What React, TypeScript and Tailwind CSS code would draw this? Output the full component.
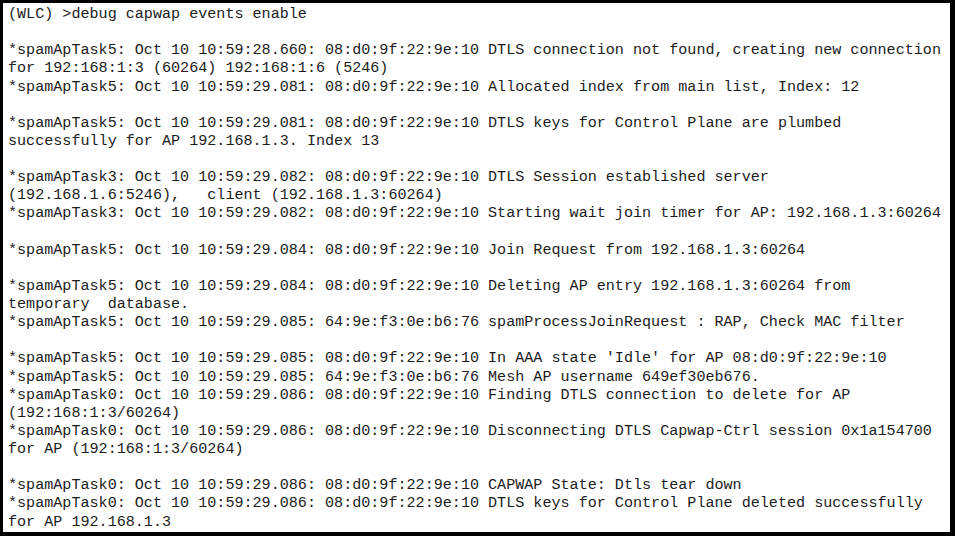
const lines = [
  "(WLC) >debug capwap events enable",
  "",
  "*spamApTask5: Oct 10 10:59:28.660: 08:d0:9f:22:9e:10 DTLS connection not found, creating new connection",
  "for 192:168:1:3 (60264) 192:168:1:6 (5246)",
  "*spamApTask5: Oct 10 10:59:29.081: 08:d0:9f:22:9e:10 Allocated index from main list, Index: 12",
  "",
  "*spamApTask5: Oct 10 10:59:29.081: 08:d0:9f:22:9e:10 DTLS keys for Control Plane are plumbed",
  "successfully for AP 192.168.1.3. Index 13",
  "",
  "*spamApTask3: Oct 10 10:59:29.082: 08:d0:9f:22:9e:10 DTLS Session established server",
  "(192.168.1.6:5246),   client (192.168.1.3:60264)",
  "*spamApTask3: Oct 10 10:59:29.082: 08:d0:9f:22:9e:10 Starting wait join timer for AP: 192.168.1.3:60264",
  "",
  "*spamApTask5: Oct 10 10:59:29.084: 08:d0:9f:22:9e:10 Join Request from 192.168.1.3:60264",
  "",
  "*spamApTask5: Oct 10 10:59:29.084: 08:d0:9f:22:9e:10 Deleting AP entry 192.168.1.3:60264 from",
  "temporary  database.",
  "*spamApTask5: Oct 10 10:59:29.085: 64:9e:f3:0e:b6:76 spamProcessJoinRequest : RAP, Check MAC filter",
  "",
  "*spamApTask5: Oct 10 10:59:29.085: 08:d0:9f:22:9e:10 In AAA state 'Idle' for AP 08:d0:9f:22:9e:10",
  "*spamApTask5: Oct 10 10:59:29.085: 64:9e:f3:0e:b6:76 Mesh AP username 649ef30eb676.",
  "*spamApTask0: Oct 10 10:59:29.086: 08:d0:9f:22:9e:10 Finding DTLS connection to delete for AP",
  "(192:168:1:3/60264)",
  "*spamApTask0: Oct 10 10:59:29.086: 08:d0:9f:22:9e:10 Disconnecting DTLS Capwap-Ctrl session 0x1a154700",
  "for AP (192:168:1:3/60264)",
  "",
  "*spamApTask0: Oct 10 10:59:29.086: 08:d0:9f:22:9e:10 CAPWAP State: Dtls tear down",
  "*spamApTask0: Oct 10 10:59:29.086: 08:d0:9f:22:9e:10 DTLS keys for Control Plane deleted successfully",
  "for AP 192.168.1.3",
];

export default function App() {
  return (
    <div className="w-[955px] h-[536px] bg-white border-t-[3px] border-l-[3px] border-r-[5px] border-b-[4px] border-black overflow-hidden">
      <div className="pt-[2px] pl-[5px] font-['Liberation_Mono',monospace] text-[15.1px] leading-[18.14px] text-[#1c1c1c] whitespace-pre">
        {lines.map((line, i) => (
          <div key={i} className="h-[18.14px]">{line}</div>
        ))}
      </div>
    </div>
  );
}
